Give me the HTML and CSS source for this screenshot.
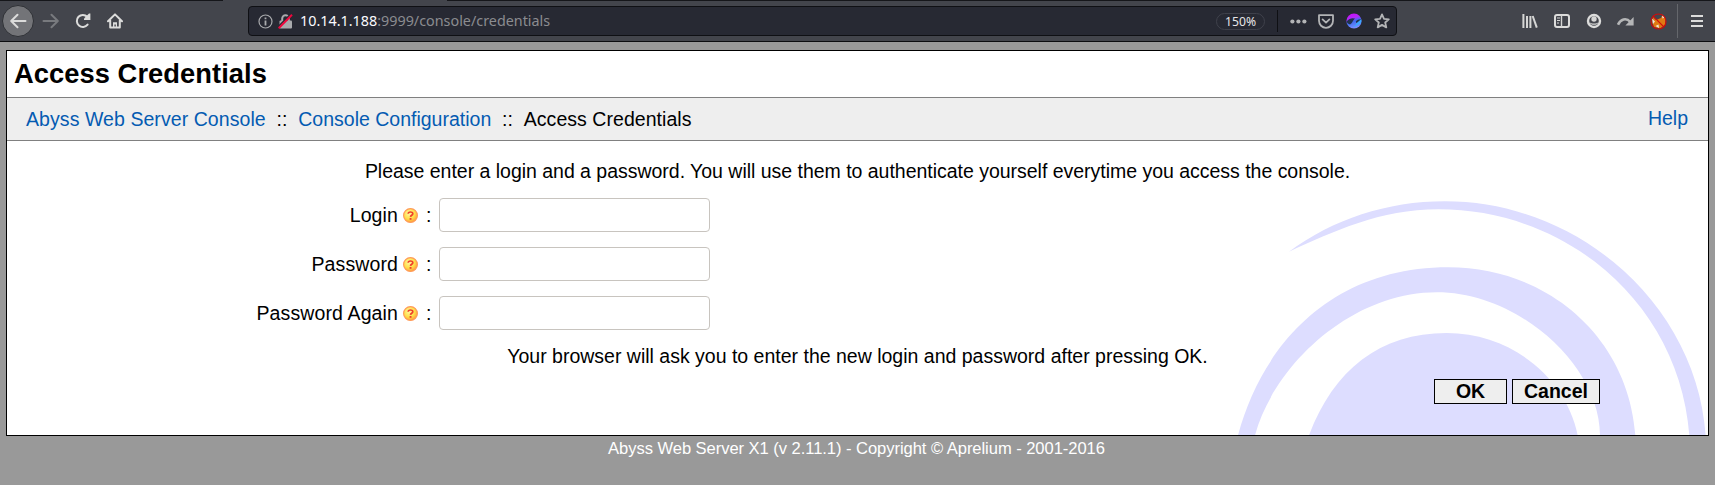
FILE: index.html
```html
<!DOCTYPE html>
<html lang="en">
<head>
<meta charset="utf-8">
<title>Access Credentials</title>
<link rel="stylesheet" href="styles.css">
</head>
<body>
<svg width="0" height="0" class="defs">
  <defs>
    <radialGradient id="helpFill" cx="0.4" cy="0.35" r="0.65">
      <stop offset="0" stop-color="#fff7a0"/>
      <stop offset="0.6" stop-color="#ffe04a"/>
      <stop offset="1" stop-color="#ffa03c"/>
    </radialGradient>
    <linearGradient id="orbFill" x1="0" y1="0" x2="0.3" y2="1">
      <stop offset="0" stop-color="#d800ff"/>
      <stop offset="0.4" stop-color="#b02cf5"/>
      <stop offset="0.6" stop-color="#3c6cf0"/>
      <stop offset="1" stop-color="#7a8cff"/>
    </linearGradient>
    <symbol id="help" viewBox="0 0 15 15">
      <circle cx="7.5" cy="7.5" r="6.9" fill="url(#helpFill)" stroke="#ff9a5a" stroke-width="1.2"/>
      <path d="M5.2 5.8C5.2 3.4 9.8 3.4 9.8 5.7C9.8 7.2 7.6 7.2 7.5 8.9" fill="none" stroke="#f0402a" stroke-width="1.7"/>
      <rect x="6.6" y="10" width="1.9" height="1.8" fill="#f0402a"/>
    </symbol>
  </defs>
</svg>

<header class="toolbar">
  <nav class="nav">
    <button class="back" aria-label="Back">
      <svg width="18" height="18" viewBox="0 0 18 18"><path d="M16.5 9H2.5M8.5 2.8L2.2 9L8.5 15.2" class="line"/></svg>
    </button>
    <svg class="forward" width="18" height="18" viewBox="0 0 18 18"><path d="M1.5 9H15.5M9.5 2.8L15.8 9L9.5 15.2" class="line"/></svg>
    <svg class="reload" width="16" height="16" viewBox="0 0 16 16"><path d="M12.6 11.6A6 6 0 1 1 12.2 3.8L13.6 5.2" class="line"/><path d="M15.4 0.6V7H9V5.6L14 0.6Z" fill="#dcdcdb"/></svg>
    <svg class="home" width="16" height="16" viewBox="0 0 16 16"><path d="M1 8.3L8 1.4L15 8.3M3.2 7.5V14.6H12.8V7.5" class="line"/><path d="M6 15V9.2H10V15H8.8V11.6H7.4V15Z" fill="#dcdcdb"/></svg>
  </nav>
  <div class="urlbar">
    <svg class="info" width="15" height="15" viewBox="0 0 15 15"><circle cx="7.5" cy="7.5" r="6.5" fill="none" stroke="#a9aaad" stroke-width="1.2"/><path d="M7.5 6.5V11.5M7.5 3.5V5.2" stroke="#a9aaad" stroke-width="1.8"/></svg>
    <svg class="lock" width="15" height="15" viewBox="0 0 15 15"><path d="M4.2 7V4.5A3.3 3.3 0 0 1 10.8 4.5V7" fill="none" stroke="#a9aaad" stroke-width="2"/><rect x="1.5" y="6.5" width="12.5" height="8" rx="1" fill="#a9aaad"/><path d="M0 12.9L13 -0.1" stroke="#272933" stroke-width="1.6"/><path d="M0.6 14.2L14 0.8" stroke="#f0063c" stroke-width="2"/></svg>
    <span class="url"><b>10.14.1.188</b>:9999/console/credentials</span>
    <span class="zoom">150%</span>
    <span class="divider"></span>
    <svg class="dots" width="17" height="5" viewBox="0 0 17 5"><circle cx="2.4" cy="2.5" r="2.1"/><circle cx="8.4" cy="2.5" r="2.1"/><circle cx="14.4" cy="2.5" r="2.1"/></svg>
    <svg class="pocket" width="16" height="15" viewBox="0 0 16 15"><path d="M1 1.2H15V6.8A7 7 0 0 1 1 6.8Z" class="soft"/><path d="M4.6 5.4L8 8.6L11.4 5.4" class="soft"/></svg>
    <svg class="orb" width="16" height="16" viewBox="0 0 16 16"><circle cx="8" cy="8" r="7.6" fill="url(#orbFill)"/><path d="M0.6 8.5C3.5 4.8 7.2 4.7 9.4 5.8C6.6 6.5 7.2 9.7 4 11.5C2.5 11 1 10 0.6 8.5Z" fill="#21324f"/><path d="M6.5 13.6C10.8 13 10 8.6 15.2 6.2C15.7 8.4 15.2 11 12.5 11.4C10 13.6 8 14 6.5 13.6Z" fill="#3aa8ff"/><path d="M9.8 8.6C11 7.1 13.4 6.2 15 6.4C13.5 7.2 12.2 9 10.2 10Z" fill="#21324f"/></svg>
    <svg class="star" width="16" height="16" viewBox="0 0 16 16"><path d="M8 1.4L10 5.8L14.8 6.3L11.2 9.5L12.3 14.4L8 11.9L3.7 14.4L4.8 9.5L1.2 6.3L6 5.8Z" class="soft"/></svg>
  </div>
  <div class="tools">
    <svg width="16" height="16" viewBox="0 0 16 16"><path d="M1.4 1V15M5 3V15M8.4 3V15" stroke="#d6d6d5" stroke-width="2"/><path d="M10.7 3L14.8 14.6" stroke="#d6d6d5" stroke-width="2"/></svg>
    <svg width="16" height="16" viewBox="0 0 16 16"><rect x="1" y="2" width="14" height="12" rx="2" class="line"/><path d="M7.5 2V14" stroke="#d6d6d5" stroke-width="1.4"/><path d="M3 5H6M3 7.5H6M3 10H5" stroke="#d6d6d5" stroke-width="1"/></svg>
    <svg width="16" height="16" viewBox="0 0 16 16"><circle cx="8" cy="8" r="6" class="line thick"/><circle cx="8" cy="6" r="2.7" fill="#d6d6d5"/><path d="M3.5 9.2C5 11 11 11 12.5 9.2C12 12.6 4 12.6 3.5 9.2Z" fill="#d6d6d5"/></svg>
    <svg class="share" width="18" height="16" viewBox="0 0 18 16"><path d="M1 11.8C3.5 6.2 9 4 13.4 9" fill="none" stroke="#b5b6b7" stroke-width="2.6"/><path d="M16.6 4V12.4H8.4Z" fill="#b5b6b7"/></svg>
    <svg class="fox" width="17" height="17" viewBox="0 0 17 17"><path d="M3 4L6 7L11 5L12.5 1.5L15.5 6L15 12L10 15.5L4 14L2.5 10Z" fill="#e07a12"/><path d="M2 5.5L5 8.5L3 11ZM12 2L15 4.5L12.5 5.5ZM5.5 13L8.5 11.5L9 15Z" fill="#f3e8da"/><circle cx="8.5" cy="8.5" r="7.5" fill="none" stroke="#d00b0b" stroke-width="1.2"/><path d="M3.2 3.2L13.8 13.8" stroke="#d00b0b" stroke-width="1.2"/></svg>
    <span class="divider"></span>
    <svg class="menu" width="12" height="12" viewBox="0 0 12 12"><path d="M0 1H12M0 6H12M0 11H12" stroke="#dcdcdb" stroke-width="2"/></svg>
  </div>
</header>

<main class="panel">
  <svg class="watermark" width="508" height="255" viewBox="0 0 1524 765">
    <g fill="#ddddff">
      <path d="M267 215C400 118 560 64 735 64C1140 64 1490 378 1517 766H1468C1440 380 1110 88 715 88C540 88 400 155 267 215Z"/>
      <path d="M114 766C185 500 390 262 745 262C1040 262 1285 470 1306 766H1200C1200 560 960 337 710 337C450 337 220 560 165 766Z"/>
      <path d="M327 766C400 570 540 459 740 459C940 459 1100 600 1133 766Z"/>
    </g>
  </svg>
  <h1 class="title">Access Credentials</h1>
  <div class="crumbs">
    <div><a class="root" href="#">Abyss Web Server Console</a>&nbsp; ::&nbsp; <a href="#">Console Configuration</a>&nbsp; ::&nbsp; <span class="current">Access Credentials</span></div>
    <a class="helplink" href="#">Help</a>
  </div>
  <form class="form">
    <p class="intro">Please enter a login and a password. You will use them to authenticate yourself everytime you access the console.</p>
    <div class="fields">
      <label class="row"><span class="name">Login</span><svg class="hint"><use href="#help"/></svg><span class="colon">:</span><input type="text"></label>
      <label class="row"><span class="name">Password</span><svg class="hint"><use href="#help"/></svg><span class="colon">:</span><input type="password"></label>
      <label class="row"><span class="name">Password Again</span><svg class="hint"><use href="#help"/></svg><span class="colon">:</span><input type="password"></label>
    </div>
    <p class="note">Your browser will ask you to enter the new login and password after pressing OK.</p>
    <div class="actions">
      <button class="btn ok" type="button">OK</button>
      <button class="btn cancel" type="button">Cancel</button>
    </div>
  </form>
</main>
<footer class="footer">Abyss Web Server X1 (v 2.11.1) - Copyright © Aprelium - 2001-2016</footer>
</body>
</html>
```
FILE: styles.css
```css
* { box-sizing: border-box; }
body {
  margin: 0;
  height: 485px;
  overflow: hidden;
  background: #999;
  color: #000;
  font: 19.5px/22px "Liberation Sans", Arial, sans-serif;
}
.defs { position: absolute; }
svg { display: block; flex: none; }
a { color: #045bb2; text-decoration: none; }
p { margin: 0; }

.toolbar {
  display: flex;
  align-items: center;
  height: 42px;
  padding-top: 1px;
  background:
    linear-gradient(90deg, #15161a 223px, #43454c 223px, #43454c 447px, #15161a 447px) 0 0 / 100% 1px no-repeat,
    #43454c;
  border-bottom: 1px solid #0c0d10;
}
.line { fill: none; stroke: #dcdcdb; stroke-width: 2; stroke-linecap: round; stroke-linejoin: round; }
.thick { stroke-width: 2.4; }
.nav { display: flex; align-items: center; width: 248px; padding-left: 2px; }
.back {
  display: flex;
  align-items: center;
  justify-content: center;
  width: 32px;
  height: 32px;
  padding: 0;
  border: 1px solid #2f3136;
  border-radius: 50%;
  background: #737478;
}
.forward { margin-left: 8px; opacity: 0.35; }
.reload { margin-left: 15px; }
.home { margin-left: 16px; }

.urlbar {
  display: flex;
  align-items: center;
  width: 1149px;
  height: 30px;
  padding-left: 9px;
  border: 1px solid #0f1014;
  border-radius: 4px;
  background: #272933;
  font: 14.35px/20px "Noto Sans", sans-serif;
}
.lock { margin-left: 5px; }
.url { margin-left: 7px; flex: 1; color: #8b8c90; white-space: nowrap; }
.url b { font-weight: 400; color: #fbfbfe; }
.zoom {
  width: 49px;
  height: 17px;
  border: 1px solid #3f414b;
  border-radius: 9px;
  color: #e6e6e8;
  font-size: 12.2px;
  line-height: 15px;
  text-align: center;
}
.divider { width: 1px; height: 22px; margin-left: 12px; background: #0f1014; }
.dots { margin-left: 12px; fill: #b3b4b6; }
.soft { fill: none; stroke: #b3b4b6; stroke-width: 1.8; stroke-linejoin: round; stroke-linecap: round; }
.pocket { margin-left: 11px; }
.orb { margin-left: 12px; }
.star { margin: 0 6px 0 12px; }

.tools { display: flex; align-items: center; gap: 16px; margin-left: 125px; }
.tools .share { margin-left: -1px; }
.tools .fox { margin-left: -1px; }
.tools .divider { height: 34px; margin-left: -6px; background: #65676c; }
.menu { margin-left: -3px; }

.panel {
  position: relative;
  width: 1703px;
  height: 386px;
  margin: 8px 0 0 6px;
  border: 1px solid #000;
  background: #fff;
}
.watermark { position: absolute; right: 0; bottom: 0; }
.title {
  margin: 0;
  padding: 7px 7px 8px;
  border-bottom: 1px solid #808080;
  font-size: 27.3px;
  line-height: 31px;
  letter-spacing: 0.06px;
}
.crumbs {
  display: flex;
  justify-content: space-between;
  padding: 10px 20px 10px 19px;
  border-bottom: 1px solid #808080;
  background: #eee;
}
.root { letter-spacing: 0.07px; }
.current { letter-spacing: 0.05px; }
.helplink { margin-top: -1px; }
.form { position: relative; padding-top: 19px; }
.intro, .note { text-align: center; }
.intro { letter-spacing: -0.02px; }
.fields { display: grid; gap: 15px; margin: 16px 0 15px; }
.row { display: flex; align-items: center; height: 34px; }
.name { width: 391px; text-align: right; letter-spacing: 0.12px; }
.hint { width: 15px; height: 15px; margin-left: 5px; }
.colon { width: 21px; padding-left: 8px; }
.row input {
  width: 271px;
  height: 34px;
  padding: 0 6px;
  border: 1px solid #c8c4bf;
  border-radius: 4px;
  background: #fff;
}
.actions { display: flex; justify-content: flex-end; gap: 5px; margin: 12px 108px 0 0; }
.btn {
  height: 25px;
  padding: 0 0 1px;
  border: 1px solid #000;
  background: #eee;
  color: #000;
  font: bold 19.5px/22px "Liberation Sans", Arial, sans-serif;
}
.ok { width: 73px; }
.cancel { width: 88px; }
.footer {
  margin-top: 3px;
  padding-right: 2px;
  color: #fff;
  font-size: 16.575px;
  line-height: 19px;
  letter-spacing: -0.055px;
  text-align: center;
}
```
